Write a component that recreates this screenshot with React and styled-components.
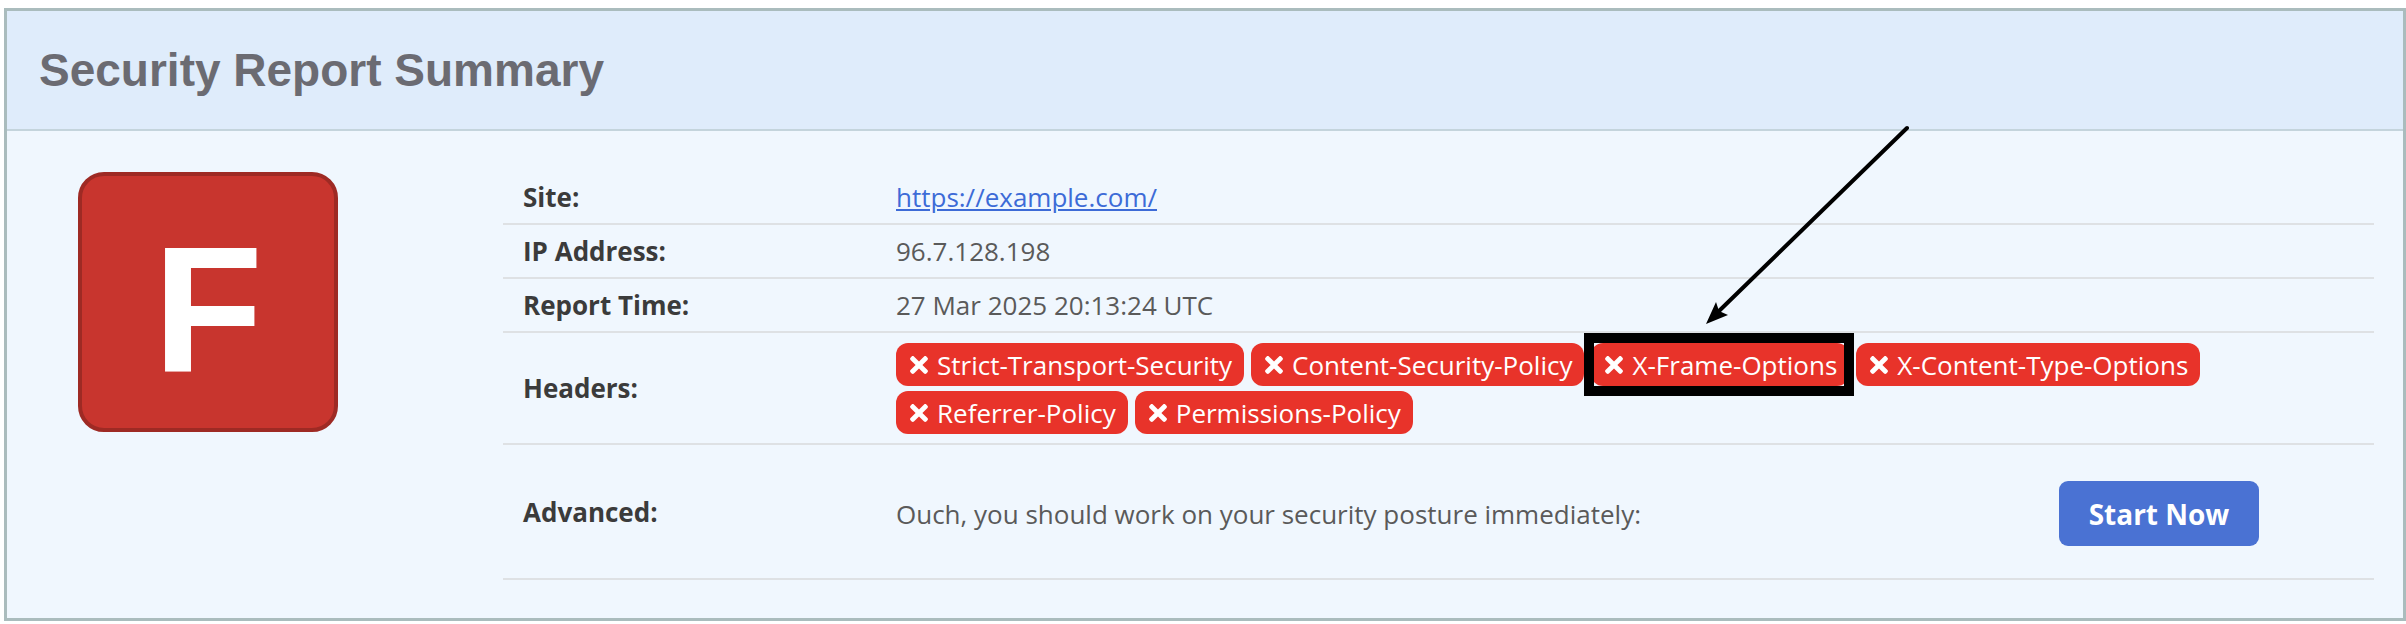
import React from 'react';
import styled, { createGlobalStyle } from 'styled-components';
import { FaTimes } from 'react-icons/fa';

const GlobalStyle = createGlobalStyle`
  html, body {
    margin: 0;
    background: #fff;
  }
`;

const headers = [
  'Strict-Transport-Security',
  'Content-Security-Policy',
  'X-Frame-Options',
  'X-Content-Type-Options',
  'Referrer-Policy',
  'Permissions-Policy',
];

const App = () => {
  return (
    <Page>
      <GlobalStyle />
      <Card>
        <CardHeader>
          <Title>Security Report Summary</Title>
        </CardHeader>
        <CardBody>
          <GradeBadge>F</GradeBadge>
          <InfoTable>
            <Row>
              <Label>Site:</Label>
              <Value>
                <SiteLink href="https://example.com/">https://example.com/</SiteLink>
              </Value>
            </Row>
            <Row>
              <Label>IP Address:</Label>
              <Value>96.7.128.198</Value>
            </Row>
            <Row>
              <Label>Report Time:</Label>
              <Value>27 Mar 2025 20:13:24 UTC</Value>
            </Row>
            <Row>
              <Label>Headers:</Label>
              <Value $pad="10px 20px 9px">
                <TagList>
                  {headers.map((h) => (
                    <Tag key={h} $marked={h === 'X-Frame-Options'}>
                      <CrossIcon />
                      {h}
                    </Tag>
                  ))}
                </TagList>
              </Value>
            </Row>
            <Row>
              <Label>Advanced:</Label>
              <Value $pad="36px 20px 32px" $spread>
                <span>Ouch, you should work on your security posture immediately:</span>
                <StartButton>Start Now</StartButton>
              </Value>
            </Row>
          </InfoTable>
        </CardBody>
        {/* annotation arrow drawn over the card */}
        <Arrow width="240" height="230" viewBox="0 0 240 230">
          <line x1="220" y1="17" x2="32" y2="200" stroke="#000" strokeWidth="4" strokeLinecap="round" />
          <polygon points="19,213 41,204 32,200 29,191" fill="#000" />
        </Arrow>
      </Card>
    </Page>
  );
};

const Page = styled.div`
  padding: 8px 0 0 4px;
`;

const Card = styled.div`
  position: relative;
  border: 3px solid #aabcbd;
  background: #f0f7fe;
`;

const CardHeader = styled.div`
  height: 118px;
  display: flex;
  align-items: center;
  padding: 0 32px;
  background: #dfecfb;
  border-bottom: 2px solid #c4d4dc;
`;

const Title = styled.h2`
  margin: 0;
  font-family: "Liberation Sans", Arial, sans-serif;
  font-weight: bold;
  font-size: 46px;
  color: #6b6b72;
`;

const CardBody = styled.div`
  display: flex;
  align-items: flex-start;
  padding: 40px 29px 38px 71px;
`;

const GradeBadge = styled.div`
  flex-shrink: 0;
  box-sizing: border-box;
  width: 260px;
  height: 260px;
  margin: 1px 165px 0 0;
  padding-top: 16px;
  display: flex;
  align-items: center;
  justify-content: center;
  background: #c8352e;
  border: 4px solid #9e2a24;
  border-radius: 26px;
  color: #fff;
  font-family: "Liberation Sans", Arial, sans-serif;
  font-weight: bold;
  font-size: 180px;
  line-height: 1;
`;

const InfoTable = styled.div`
  flex: 1;
  font-family: "Open Sans", sans-serif;
  font-size: 26px;
  line-height: 30px;
`;

const Row = styled.div`
  display: grid;
  grid-template-columns: 373px 1fr;
  border-bottom: 2px solid #dee1e4;
`;

const Label = styled.div`
  display: flex;
  align-items: center;
  padding: 11px 20px;
  font-weight: 700;
  color: #3b3b3b;
`;

const Value = styled.div`
  display: flex;
  align-items: center;
  justify-content: ${({ $spread }) => ($spread ? 'space-between' : 'flex-start')};
  padding: ${({ $pad }) => $pad || '11px 20px'};
  color: #5a5a5a;
`;

const SiteLink = styled.a`
  color: #3d6bd7;
  text-decoration: underline;
`;

const TagList = styled.div`
  display: flex;
  flex-wrap: wrap;
  gap: 5px 7px;
`;

const Tag = styled.span`
  position: relative;
  display: inline-flex;
  align-items: center;
  height: 43px;
  padding: 0 12px 0 14px;
  border-radius: 12px;
  background: #e8332a;
  color: #fff;
  white-space: nowrap;

  ${({ $marked }) =>
    $marked &&
    `
    &::after {
      content: '';
      position: absolute;
      top: -10px;
      bottom: -10px;
      left: -7px;
      right: -5px;
      border: 10px solid #000;
      pointer-events: none;
    }
  `}
`;

const CrossIcon = styled(FaTimes)`
  flex-shrink: 0;
  width: 18px;
  height: 26px;
  margin-right: 9px;
`;

const StartButton = styled.button`
  width: 200px;
  height: 65px;
  margin-right: 95px;
  border: none;
  border-radius: 9px;
  background: #4a72d3;
  color: #fff;
  font-family: "Open Sans", sans-serif;
  font-weight: 700;
  font-size: 28px;
  cursor: pointer;
`;

const Arrow = styled.svg`
  position: absolute;
  left: 1680px;
  top: 100px;
  pointer-events: none;
`;

export default App;
